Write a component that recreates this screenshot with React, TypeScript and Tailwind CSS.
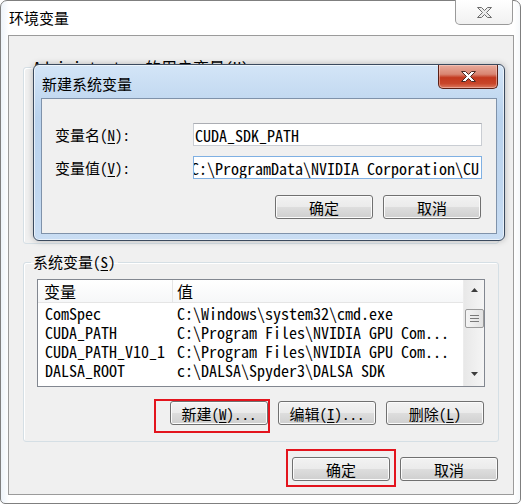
import React from "react";

const mono = "font-['Noto_Sans_Mono_CJK_SC','Liberation_Mono','Noto_Sans_CJK_SC',monospace]";
const sans = "font-['Noto_Sans_CJK_SC','Noto_Sans',sans-serif]";

const rows = [
  ["ComSpec", "C:\\Windows\\system32\\cmd.exe"],
  ["CUDA_PATH", "C:\\Program Files\\NVIDIA GPU Com..."],
  ["CUDA_PATH_V10_1", "C:\\Program Files\\NVIDIA GPU Com..."],
  ["DALSA_ROOT", "c:\\DALSA\\Spyder3\\DALSA SDK"],
  ["DXSDK_DIR", "C:\\Program Files (x86)\\Micro..."],
];

const CloseGlyph = ({ fill, stroke }: { fill: string; stroke: string }) => (
  <svg width="17" height="13" viewBox="0 0 17 13">
    <path
      d="M1.5 1.5h4l3 3 3-3h4l-5 5 5 5h-4l-3-3-3 3h-4l5-5z"
      fill={fill}
      stroke={stroke}
      strokeWidth="1"
      strokeLinejoin="round"
    />
  </svg>
);

const WinButton = ({ children, className = "" }: { children: React.ReactNode; className?: string }) => (
  <div
    className={`flex h-[24px] w-[98px] items-center justify-center rounded-[3px] border border-[#707070] bg-[linear-gradient(180deg,#f2f2f2_0%,#ebebeb_48%,#dddddd_52%,#cfcfcf_100%)] text-[15px] leading-none text-black shadow-[inset_0_0_0_1px_#fbfbfb] ${mono} ${className}`}
  >
    {children}
  </div>
);

const Mn = ({ c }: { c: string }) => <span className="underline underline-offset-2">{c}</span>;

export default function App() {
  return (
    <div className="relative h-[504px] w-[522px] overflow-hidden bg-white">
      {/* 环境变量 window */}
      <div className="flex h-[504px] w-[521px] flex-col rounded-t-[7px] rounded-b-[5px] border border-[#7f7f7f] bg-[linear-gradient(90deg,#eef4fa_0px,#ffffff_8px,#ffffff_513px,#f3f6f9_521px)]">
        <div className="flex h-[34px] items-start justify-between">
          <span className={`pl-[8px] pt-[8px] text-[15px] leading-[18px] text-black ${sans}`}>环境变量</span>
          <div className="-mt-px mr-[7px] flex h-[25px] w-[58px] items-center justify-center rounded-b-[5px] border border-t-0 border-[#9a9a9a] bg-[linear-gradient(180deg,#ffffff,#f1f1f1)]">
            <CloseGlyph fill="#ececec" stroke="#6d6d6d" />
          </div>
        </div>

        <div className="ml-[7px] flex h-[460px] w-[506px] flex-col border border-[#9b9b9b] bg-[#f0f0f0] pl-[14px]">
          {/* user variables (mostly hidden) */}
          <fieldset className="mt-[23px] h-[185px] w-[476px] rounded-[3px] border border-[#d5dfe5] p-0 shadow-[inset_1px_1px_0_#fff]">
            <legend className={`ml-[7px] px-[2px] text-[16px] leading-[16px] text-black ${mono}`}>
              Administrator 的用户变量(<Mn c="U" />)
            </legend>
          </fieldset>

          {/* system variables */}
          <fieldset className="mt-[10px] flex h-[188px] w-[476px] flex-col rounded-[3px] border border-[#d5dfe5] p-0 shadow-[inset_1px_1px_0_#fff]">
            <legend className={`ml-[7px] px-[2px] text-[15px] leading-[16px] text-black ${mono}`}>
              系统变量(<Mn c="S" />)
            </legend>
            <div className="ml-[13px] mt-[9px] flex h-[108px] w-[448px] border border-[#828790] bg-white">
              <div className="flex w-[425px] flex-col overflow-hidden">
                <div className={`flex h-[23px] shrink-0 items-center border-b border-[#e5e5e5] bg-[linear-gradient(180deg,#ffffff,#f6f7f8)] text-[16px] leading-none text-black ${mono}`}>
                  <span className="flex h-full w-[135px] items-center border-r border-[#e5e5e5] pl-[6px]">变量</span>
                  <span className="pl-[4px]">值</span>
                </div>
                <div className={`h-[80px] overflow-hidden pt-px text-[16px] text-black ${mono}`}>
                  {rows.map(([k, v]) => (
                    <div key={k} className="flex h-[19px] items-center whitespace-nowrap leading-[19px]">
                      <span className="w-[135px] pl-[7px]">{k}</span>
                      <span className="pl-[4px]">{v}</span>
                    </div>
                  ))}
                </div>
              </div>
              {/* scrollbar */}
              <div className="relative flex w-[21px] flex-col items-center border-l border-[#ececec] bg-[linear-gradient(90deg,#e8e8e8,#f5f5f5)]">
                <svg className="mt-[8px]" width="7" height="4" viewBox="0 0 7 4">
                  <path d="M3.5 0L7 4H0z" fill="#3c3c3c" />
                </svg>
                <div className="mt-[17px] flex h-[19px] w-[19px] flex-col items-center justify-center gap-[2px] rounded-[2px] border border-[#9b9b9b] bg-[linear-gradient(90deg,#f4f4f4,#e2e2e2)]">
                  <span className="h-px w-[9px] bg-[#7a7a7a]" />
                  <span className="h-px w-[9px] bg-[#7a7a7a]" />
                  <span className="h-px w-[9px] bg-[#7a7a7a]" />
                </div>
                <svg className="mt-auto mb-[10px]" width="7" height="4" viewBox="0 0 7 4">
                  <path d="M0 0H7L3.5 4z" fill="#3c3c3c" />
                </svg>
              </div>
            </div>
            <div className="mt-[14px] flex justify-end gap-[10px] pr-[14px]">
              <div className="relative">
                <WinButton>新建(<Mn c="W" />)...</WinButton>
                <span className="absolute -left-[16px] -top-[2px] h-[34px] w-[116px] border-2 border-[#e3141d]" />
              </div>
              <WinButton>编辑(<Mn c="I" />)...</WinButton>
              <WinButton>删除(<Mn c="L" />)</WinButton>
            </div>
          </fieldset>

          <div className="mt-[15px] flex justify-end gap-[10px] pr-[15px]">
            <div className="relative">
              <WinButton>确定</WinButton>
              <span className="absolute -left-[6px] -top-[8px] h-[38px] w-[110px] border-2 border-[#e3141d]" />
            </div>
            <WinButton>取消</WinButton>
          </div>
        </div>
      </div>

      {/* 新建系统变量 dialog */}
      <div className="absolute left-[33px] top-[64px] flex h-[177px] w-[472px] flex-col rounded-[6px] border border-[#3b4a5e] bg-[linear-gradient(180deg,#d3e5f7_0%,#b9d2ed_30%,#bfd6ef_70%,#c9ddf3_100%)] shadow-[inset_0_0_0_1px_rgba(255,255,255,0.6),0_0_6px_rgba(0,0,0,0.25)]">
        <div className="flex h-[33px] items-start justify-between">
          <span className={`pl-[8px] pt-[10px] text-[15px] leading-[18px] text-black ${sans}`}>新建系统变量</span>
          <div className="mr-[6px] flex h-[24px] w-[60px] items-center justify-center rounded-b-[5px] border border-t-0 border-[#5a2016] bg-[linear-gradient(180deg,#e9ab9c_0%,#d98572_40%,#c3391f_55%,#c84529_80%,#dc7a5f_100%)] shadow-[inset_0_0_0_1px_rgba(255,220,210,0.45)]">
            <CloseGlyph fill="#ffffff" stroke="#4a2a24" />
          </div>
        </div>
        <div className={`ml-[7px] flex h-[136px] w-[456px] flex-col border border-[#7f92aa] bg-[#f0f0f0] pl-[13px] pr-[14px] pt-[24px] text-black ${mono}`}>
          <div className="flex h-[23px] items-center">
            <span className="w-[138px] text-[15px] leading-none">
              变量名(<Mn c="N" />):
            </span>
            <div className="flex h-[23px] w-[289px] items-center border border-[#c9cdd3] border-t-[#abadb3] bg-white pl-[1px] text-[16px]">
              CUDA_SDK_PATH
            </div>
          </div>
          <div className="mt-[10px] flex h-[23px] items-center">
            <span className="w-[138px] text-[15px] leading-none">
              变量值(<Mn c="V" />):
            </span>
            <div className="flex h-[23px] w-[289px] items-center overflow-hidden border border-[#7fb0e3] bg-white pr-[2px] text-[16px]">
              <span className="-ml-[3px] overflow-hidden whitespace-nowrap">
                C:\ProgramData\NVIDIA Corporation\CUDA Samples\v10.1
              </span>
            </div>
          </div>
          <div className="mt-[16px] flex justify-end gap-[10px] pr-px">
            <WinButton>确定</WinButton>
            <WinButton>取消</WinButton>
          </div>
        </div>
      </div>
    </div>
  );
}
